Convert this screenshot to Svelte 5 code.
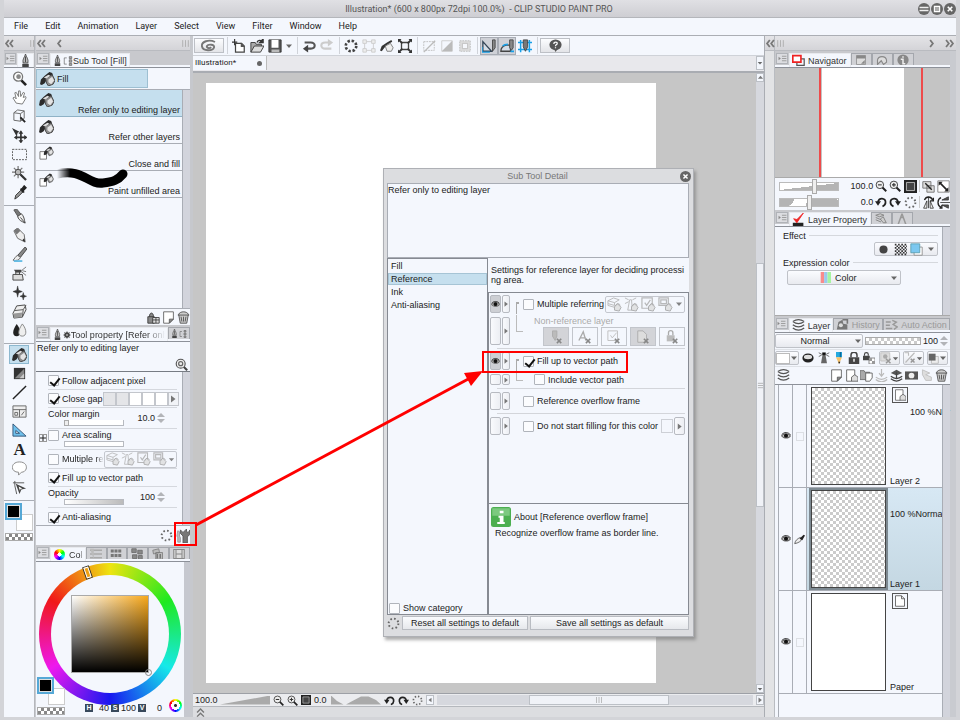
<script lang="ts">
  interface Layer {
    name: string;
    info: string;
    kind: 'raster' | 'active' | 'paper';
  }

  const menus = ['File', 'Edit', 'Animation', 'Layer', 'Select', 'View', 'Filter', 'Window', 'Help'];

  const toolGroups = [
    ['zoom', 'hand', 'cube', 'move', 'marquee', 'wand', 'dropper'],
    ['pen', 'pencil', 'brush', 'airbrush', 'sparkle', 'eraser', 'blend'],
    ['fill', 'gradient', 'line', 'frame', 'ruler', 'text', 'balloon', 'correct'],
  ];

  const subTools = [
    { name: 'Refer only to editing layer', icon: 'fill' },
    { name: 'Refer other layers', icon: 'fill' },
    { name: 'Close and fill', icon: 'fillpage' },
    { name: 'Paint unfilled area', icon: 'fillpage' },
  ];

  const commandGroups = [
    ['newpage', 'open', 'save', 'caret'],
    ['undo', 'redo'],
    ['clear', 'crop', 'fillcmd', 'scale'],
    ['deselect', 'invert', 'border'],
    ['snapruler', 'snapspecial', 'snapgrid'],
  ];

  const categories = ['Fill', 'Reference', 'Ink', 'Anti-aliasing'];
  const referTargets = ['reflayers', 'refbeacon', 'refcheck', 'reffolder'];
  const excluded = ['xpencil', 'xtext', 'xcheck', 'xpage', 'xlock'];

  const layers: Layer[] = [
    { name: 'Layer 2', info: '100 %Nor', kind: 'raster' },
    { name: 'Layer 1', info: '100 %Normal', kind: 'active' },
    { name: 'Paper', info: '', kind: 'paper' },
  ];

  let category = $state('Reference');
  let subTool = $state(0);

  // Tipped bucket, shared by the fill tool and its sub tools
  const bucket =
    '<path d="M0 14l1-5 4-4 5-4 3 1 1 3-6 3-3 5-3 2z" fill="#2b2b2b"/><path d="M6 8l7-4 3 6-2 4-5 2-2-3z" fill="#8c8c8c" stroke="#444"/><path d="M9 9l4-3 2 4-3 4-3-2z" fill="#e4e4e4"/><path d="M4 7l5-3 2 1-4 3z" fill="#ddd"/>';
  const smallX = '<path d="M9 10l5 5M14 10l-5 5" stroke="#888" stroke-width="1.8"/>';
  const faintBucket = '<path d="M8 10l3-3 4 4-2 4-5-1z" fill="#ddd" stroke="#999"/><path d="M9 10c1-3 4-4 5-1" fill="none" stroke="#999"/>';

  const icons: Record<string, string> = {
    zoom: '<circle cx="6.500" cy="6" r="4.800" fill="#fff" stroke="#777" stroke-width="1.400"/><path d="M10 10l5 5" stroke="#222" stroke-width="2.800"/><circle cx="7" cy="6" r="2.500" fill="#888"/>',
    hand: '<path d="M4.500 14L1 8.500l1.500-1 2 2L3 3l1.500-.5L7 7V1h1.700l.6 6L12 2.500l1.400.7L12 8l2.500-1 .5 1.400-4 6.600z" fill="#fff" stroke="#777"/>',
    cube: '<path d="M2 4l4-3 7 1v8l-4 3-7-1zM2 4l7 1 4-3M9 5v8" fill="none" stroke="#666"/><path d="M9 9l5 5" stroke="#222" stroke-width="2"/>',
    move: '<path d="M0 0l8 4-2 1-1 4z" fill="#333"/><path d="M4 10h11M9.500 4v11" stroke="#333" stroke-width="1.800"/><path d="M9.500 2.500L7 6h5zM9.500 16.500L7 13h5zM2 10l3.500-2.500v5zM16.500 10L13 7.500v5z" fill="#333"/>',
    marquee: '<path d="M.5 2.500h15v11H.5z" fill="none" stroke="#555" stroke-dasharray="2 1.200"/>',
    wand: '<path d="M6.500 0v13M0 6.500h13M2 2l9 9M11 2l-9 9" stroke="#777" stroke-width="1.300"/><circle cx="6.500" cy="6.500" r="3" fill="#bbb" stroke="#444"/><path d="M9 9l6 6" stroke="#333" stroke-width="2.400"/>',
    dropper: '<path d="M3 15l1-4 6-6 2 2-6 6z" fill="#999" stroke="#333"/><path d="M9 4l4 4M10 5l3-4 2 2-4 4z" fill="#222" stroke="#222" stroke-width="1.500"/>',
    pen: '<path d="M2 1l3-1 5 6-3 3z" fill="#777" stroke="#555"/><path d="M6 8l4-3c3 3 3 6 4 10-4-2-7-3-8-7zM14 15L9 9" fill="#eee" stroke="#444"/>',
    pencil: '<path d="M2 3l4-3 7 7 1 8-8-4z" fill="#eee" stroke="#666"/><path d="M2 3l4-3 3 3-4 4z" fill="#777"/><path d="M11 13l3 2-1-4z" fill="#222"/>',
    brush: '<path d="M14 0l2 2-7 9-3-2z" fill="#888" stroke="#444"/><path d="M6 9l3 2c-1 3-4 4-8 3 2-1 2-4 5-5z" fill="#eee" stroke="#666"/><path d="M2 15h9" stroke="#66bde5" stroke-width="2"/>',
    airbrush: '<path d="M1 9h10l1 6H1zM4 9V6h4v3" fill="#ddd" stroke="#444"/><path d="M2 4h8v3H4z" fill="#444"/><path d="M10 5l5-4M10 6l5 4M11 5l4 1" stroke="#777"/>',
    sparkle: '<path d="M6 1l1 4.500L11 7 7 8.500 6 13 5 8.500 1 7l4-1.500zM12 8l.8 3 2.700 1-2.700 1-.8 3-.8-3-2.700-1 2.700-1z" fill="#333" stroke="#333" stroke-width=".5"/>',
    eraser: '<path d="M5 2l9-1 1 5-4 8-9 1-1-5z" fill="#eee" stroke="#444"/><path d="M3 7l9-1 3-5M12 6l-1 8" fill="none" stroke="#555"/><path d="M2 10l9-1-1 5-8 1z" fill="#999"/>',
    blend: '<path d="M5 1c5 6 5 13 0 13S0 8 5 1z" fill="#222"/><path d="M11 1c5 6 5 13 0 13S6 8 11 1z" fill="#eee" stroke="#888"/>',
    fill: bucket,
    fillcmd: '<path d="M0 13l2-5 6-4 5-3 1 2-5 3-4 4-3 4z" fill="#333"/><path d="M6 8l6-3 3 5-2 4H8z" fill="#eee" stroke="#777"/>',
    fillpage: `<path d="M1 6h7v8H1z" fill="#fff" stroke="#777"/><g transform="translate(5 0) scale(.65)">${bucket}</g>`,
    gradient: '<path d="M2 2h12v12H2z" fill="#333"/><path d="M3 13l10-10v10z" fill="#888"/><path d="M8 13l5-5v5z" fill="#ccc"/>',
    line: '<path d="M1 15L15 1" stroke="#222" stroke-width="1.500"/>',
    frame: '<path d="M1 2h14v12H1zM1 6h14M8 6v8M3 9h3v3H3zM10 12l3-4" fill="#eee" stroke="#666"/>',
    ruler: '<path d="M1 1l14 13H1z" fill="#6fc0ec" stroke="#357"/><path d="M4 8l4 3H4z" fill="#fff" stroke="#357"/>',
    text: '<text x="8" y="14" text-anchor="middle" font-family="Liberation Serif, serif" font-weight="bold" font-size="18" fill="#222">A</text>',
    balloon: '<path d="M8 1c10 0 9 11 2 11l-3 3v-3C-2 12-2 1 8 1z" fill="#fff" stroke="#888"/>',
    correct: '<path d="M1 3h12M3 1v5l2 9" stroke="#555" fill="none"/><path d="M4 4l11 5-5 1-2 5z" fill="#444"/><path d="M7 7l4 2-2 .5-.5 2z" fill="#fff"/>',
    dblleft: '<path d="M7 3L3 8l4 5M13 3L9 8l4 5" fill="none" stroke="#777" stroke-width="2.600"/>',
    dblright: '<path d="M3 3l4 5-4 5M9 3l4 5-4 5" fill="none" stroke="#777" stroke-width="2.600"/>',
    dblup: '<path d="M3 8l5-5 5 5M3 14l5-5 5 5" fill="none" stroke="#777" stroke-width="2"/>',
    left: '<path d="M10 3L6 8l4 5" fill="none" stroke="#777" stroke-width="2.600"/>',
    right: '<path d="M6 3l4 5-4 5" fill="none" stroke="#777" stroke-width="2.600"/>',
    grip: '<path d="M3 2v12M8 2v12M13 2v12" stroke="#aaa" stroke-width="1.500"/>',
    rowgrip: '<path d="M2 3h12M2 8h12M2 13h12" stroke="#999" stroke-width="1.500"/>',
    menu: '<path d="M7 4h8M7 8h8M7 12h8" stroke="#888" stroke-width="1.300"/><path d="M1 5l4 3-4 3z" fill="#888"/>',
    nib: '<path d="M8 0c1 4 4 6 3 11H5C4 6 7 4 8 0z" fill="#bbb" stroke="#444"/><path d="M8 3v7" stroke="#333"/><path d="M4 12h8v4H4z" fill="#444"/>',
    list: '<path d="M2 3v10M2 3h4M2 13h4" fill="none" stroke="#555"/><path d="M10 1h4v3h-4zM10 6h4v4h-4zM10 12h4v3h-4z" fill="#aaa" stroke="#555"/>',
    gear: '<circle cx="8" cy="8" r="5.500" fill="#444"/><path d="M8 1v14M1 8h14M3 3l10 10M13 3L3 13" stroke="#444" stroke-width="2"/><circle cx="8" cy="8" r="2" fill="#aaa"/>',
    spiral: '<path d="M10 9c-1 2-5 1-4-1s8-2 7 1.500-11 4-12-1S8 1 14 4" fill="none" stroke="#777" stroke-width="1.900"/>',
    newpage: '<path d="M4 5h7l3 3v7H4z" fill="#fff" stroke="#444" stroke-width="1.400"/><path d="M3 0v7M0 3.500h6" stroke="#333" stroke-width="1.300"/><path d="M10 4l5 5h-5z" fill="#555"/>',
    open: '<path d="M1 15V4h5l1 2h6v2" fill="#aaa" stroke="#333"/><path d="M1 15l4-7h11l-4 7z" fill="#ddd" stroke="#333"/><path d="M8 4c1-3 4-3 6-1M15 0v4h-4z" fill="none" stroke="#333" stroke-width="1.500"/>',
    save: '<path d="M1 1h14v14H1z" fill="#555" stroke="#333"/><path d="M4 1h8v9H4z" fill="#fff"/><path d="M4 12h9v3H4z" fill="#bbb"/>',
    caret: '<path d="M2 5h12l-6 7z" fill="#666"/>',
    undo: '<path d="M3 4h7c6 0 6 7 0 7H6" fill="none" stroke="#555" stroke-width="2.400"/><path d="M7 6.500v9L1 11z" fill="#444"/>',
    redo: '<path d="M13 11H6C0 11 0 4 6 4h4" fill="none" stroke="#ccc" stroke-width="2.400"/><path d="M9 0v8.500L15 4z" fill="#ccc"/>',
    clear: '<circle cx="8" cy="8" r="6" fill="none" stroke="#444" stroke-width="3" stroke-dasharray="2.710 2"/>',
    crop: '<path d="M3 3h10v10H3z" fill="none" stroke="#ccc"/><path d="M1 1h4v4H1zM11 1h4v4h-4zM1 11h4v4H1zM11 11h4v4h-4z" fill="#eee" stroke="#ccc"/>',
    scale: '<path d="M4 4h8v8H4z" fill="none" stroke="#444" stroke-width="1.500"/><path d="M1 1l4 4M15 1l-4 4M1 15l4-4M15 15l-4-4" stroke="#333" stroke-width="2.200"/><path d="M0 0h4L0 4zM16 0v4l-4-4zM0 16v-4l4 4zM16 16h-4l4-4z" fill="#333"/>',
    deselect: '<path d="M2 3h12v10H2z" fill="none" stroke="#bbb" stroke-dasharray="2 1"/><path d="M2 15L15 2" stroke="#bbb" stroke-width="1.600"/>',
    invert: '<path d="M2 2h12v12H2z" fill="none" stroke="#ccc"/><path d="M14 2v12H2z" fill="#bbb"/>',
    border: '<path d="M2 2h12v12H2z" fill="#ddd" stroke="#bbb" stroke-dasharray="2 1"/><path d="M5 5h6v6H5z" fill="#f5f7fb" stroke="#bbb"/>',
    snapruler: '<path d="M1 3l10 11H1z" fill="#d5dde6" stroke="#345" stroke-width="1.500"/><path d="M12 1h3v9l-3 4z" fill="#888" stroke="#444"/><path d="M0 9v6h9" stroke="#18a0e8" fill="none" stroke-width="1.600"/>',
    snapspecial: '<path d="M1 14c0-4 2-6 6-7h5v7z" fill="#d5dde6" stroke="#444" stroke-width="1.500"/><path d="M11 1h4v9l-2 3-2-3z" fill="#888" stroke="#444"/><path d="M3 8c2-2 4-2 6-2M12 14h4" stroke="#18a0e8" fill="none" stroke-width="2"/>',
    snapgrid: '<path d="M3 1v14M13 1v14M0 4h16M0 12h16" stroke="#18a0e8" stroke-width="1.700"/><path d="M6 1h5v8l-2.500 5L6 9z" fill="#777" stroke="#444"/>',
    help: '<ellipse cx="8" cy="7" rx="7.500" ry="6.500" fill="#555"/><path d="M6 12h5l-3 4z" fill="#555"/><path d="M6 6c0-3 5-3 4 0-.5 1-2 1-2 3M8 10v1.500" fill="none" stroke="#fff" stroke-width="1.500"/>',
    minus: '<circle cx="8" cy="8" r="8" fill="#666"/><path d="M2 6h12M2 10h12" stroke="#eee" stroke-width="1.800"/>',
    restore: '<circle cx="8" cy="8" r="8" fill="#666"/><path d="M4.500 4.500h7v7h-7z" fill="#aaa" stroke="#fff" stroke-width="1.500"/>',
    close: '<circle cx="8" cy="8" r="8" fill="#666"/><path d="M5 5l6 6M11 5l-6 6" stroke="#fff" stroke-width="2.200"/>',
    trash: '<path d="M2 4c2-4 10-4 12 0l-2 11H4z" fill="#ccc" stroke="#444"/><path d="M1 5h14M5 7l1 6M8 7v6M11 7l-1 6" stroke="#444"/>',
    page: '<path d="M2 1h12v9l-5 5H2z" fill="#fff" stroke="#555"/><path d="M14 10H9v5z" fill="#888" stroke="#555"/>',
    pageadd: '<path d="M2 1h10v9l-4 5H2z" fill="#fff" stroke="#555"/><path d="M8 10l4-3 4 3v5H8z" fill="#ddd" stroke="#555"/>',
    folderadd: '<path d="M0 2h5l1 2h6v9H0z" fill="#aaa" stroke="#666"/><path d="M7 5h8v6l-3 4H7z" fill="#fff" stroke="#555"/>',
    addbox: '<path d="M1 7h8v8H1zM3 7c0-6 5-6 5 0" fill="#888" stroke="#333"/><path d="M7 8h8v7H7z" fill="#ddd" stroke="#333"/><path d="M7 11h8M11 8v7" stroke="#333"/>',
    wrench: '<path d="M8 16V8L5 5V1l3 3 3-3 1-1v3l2 1 2-3v5l-3 3v7z" fill="#777" stroke="#555"/><path d="M2 2l2 1v5l1 2v5H2v-5L1 8z" fill="#bbb" stroke="#999"/>',
    ring: '<circle cx="8" cy="8" r="6" fill="none" stroke="#666" stroke-width="2.400" stroke-dasharray="2 2.710"/>',
    inspect: '<circle cx="7" cy="7" r="5.500" fill="#eee" stroke="#555" stroke-width="1.400"/><circle cx="7" cy="7" r="2.500" fill="none" stroke="#666" stroke-width="1.500"/><path d="M11 11l4 4" stroke="#444" stroke-width="2.500"/>',
    reflayers: `<path d="M1 4l6-3 6 2-5 3zM1 4v3l7 2V6M1 7v2l7 2" fill="none" stroke="#aaa"/>${faintBucket}`,
    refbeacon: `<path d="M6 3h2l1 11H4zM1 1l4 2M13 1L9 3M1 7l4-2" fill="none" stroke="#aaa"/>${faintBucket}`,
    refcheck: `<path d="M1 1h11v11H1zM4 6l2 3 4-6" fill="none" stroke="#aaa" stroke-width="1.300"/>${faintBucket}`,
    reffolder: `<path d="M1 1h10v8H1zM3 3h6v4H3z" fill="none" stroke="#aaa" stroke-width="1.300"/>${faintBucket}`,
    xpencil: `<path d="M4 1h5v6l-2 5-3-5z" fill="#bbb" stroke="#aaa"/>${smallX}`,
    xtext: `<path d="M1 12L6 2l3 10M3 9h6" fill="none" stroke="#aaa" stroke-width="1.500"/>${smallX}`,
    xcheck: `<path d="M1 1h11v11H1zM4 6l2 3 5-6" fill="none" stroke="#bbb"/>${smallX}`,
    xpage: `<path d="M2 1h6l4 4v9H2z" fill="#ddd" stroke="#aaa"/>${smallX}`,
    xlock: `<path d="M2 6h9v7H2z" fill="#bbb"/><path d="M4 6V3c0-3 5-3 5 0v3" fill="none" stroke="#aaa" stroke-width="1.500"/>${smallX}`,
    eye: '<path d="M0 8c4-6 12-6 16 0-4 6-12 5-16 0z" fill="#666"/><path d="M2 8c3-3 9-3 12 0-3 3-9 3-12 0z" fill="#ccc"/><circle cx="8" cy="7.500" r="3.300" fill="#111"/><path d="M1 6C5 1 12 2 15 6" fill="none" stroke="#222" stroke-width="1.500"/>',
    play: '<path d="M4 1l9 7-9 7z" fill="#777"/>',
    playleft: '<path d="M12 2L4 8l8 6z" fill="#777"/>',
    up: '<path d="M2 11h12L8 4z" fill="#777"/>',
    info: '<rect x="0" y="0" width="16" height="16" rx="2" fill="#4caf50"/><path d="M1 1h14v6H1z" fill="#7cc97f"/><path d="M7 3h3v2H7zM6 7h4v5h1v1.500H5V12h2V8.500H6z" fill="#fff"/>',
    navi: '<path d="M6 6h9v8H6z" fill="none" stroke="#555" stroke-width="1.500"/><path d="M1 2h10v8H1z" fill="#fff" stroke="#e22" stroke-width="2"/>',
    window: '<path d="M2 2h12v12H2z" fill="#ddd" stroke="#888"/><path d="M2 2h12v4H2z" fill="#888"/><path d="M8 13l5-5v5z" fill="#888"/>',
    bust: '<path d="M2 14V8c1-6 11-6 12 0v3l-4 3-3-5z" fill="#ddd" stroke="#888" stroke-width="1.500"/>',
    person: '<circle cx="8" cy="8" r="7.500" fill="#888"/><path d="M8 3v2M5 7h3v6h3" stroke="#eee" stroke-width="2" fill="none"/>',
    zoomout: '<circle cx="6.500" cy="6.500" r="5" fill="#eee" stroke="#444" stroke-width="1.300"/><path d="M10 10l5 5" stroke="#222" stroke-width="2.500"/><path d="M4 6.500h5" stroke="#333" stroke-width="1.500"/>',
    zoomin: '<circle cx="6.500" cy="6.500" r="5" fill="#eee" stroke="#444" stroke-width="1.300"/><path d="M10 10l5 5" stroke="#222" stroke-width="2.500"/><path d="M4 6.500h5M6.500 4v5" stroke="#333" stroke-width="1.500"/>',
    fit: '<path d="M0 0h16v16H0z" fill="#222"/><path d="M3 3h10v10H3z" fill="#444" stroke="#ccc"/>',
    resize: '<path d="M1 1h14v14H1z" fill="#fff" stroke="#777"/><path d="M3 3l10 10" stroke="#222" stroke-width="2"/><path d="M2 2h5L2 7zM14 14H9l5-5z" fill="#222"/>',
    resizetwo: '<path d="M1 2h10v8H1zM6 7h9v8H6z" fill="#ddd" stroke="#666"/><path d="M4 4l8 8" stroke="#222" stroke-width="1.800"/>',
    rotleft: '<path d="M4 9c0-8 11-7 10 0 0 2-2 4-4 5" fill="none" stroke="#222" stroke-width="2.400"/><path d="M0 7h8l-4 6z" fill="#222"/>',
    rotright: '<path d="M12 9c0-8-11-7-10 0 0 2 2 4 4 5" fill="none" stroke="#222" stroke-width="2.400"/><path d="M16 7H8l4 6z" fill="#222"/>',
    fliph: '<path d="M2 15l4-9v9zM14 15l-4-9v9zM8 1v14" fill="#eee" stroke="#333"/><path d="M3 5c2-5 8-5 10 0M14 2v4h-4" fill="none" stroke="#222" stroke-width="1.600"/>',
    flipv: '<path d="M4 8h12M6 5l8-4v4zM6 11l8 4v-4z" fill="#555" stroke="#333"/><path d="M5 2C0 4 0 12 5 14M6 11v4H3" fill="none" stroke="#222" stroke-width="1.600"/>',
    check: '<path d="M1 12h13v4H1z" fill="#222"/><path d="M2 7l4 5 8-12-6 6-2 2z" fill="#e22" stroke="#e22"/>',
    layers: '<path d="M1 3c5 4 9 4 14 0M1 7c5 4 9 4 14 0M1 11c5 4 9 4 14 0M1 3c5-3 9-3 14 0" fill="none" stroke="#555" stroke-width="1.500"/>',
    fanlayers: '<path d="M1 3l6-2 5 2-6 2zM1 6l7 3M1 9l7 3M7 8l4-3 4 8h-4z" fill="#ccc" stroke="#888" stroke-width="1.300"/>',
    compass: '<path d="M8 1l5 14M8 1L3 15M6 6h4" stroke="#999" stroke-width="2" fill="none"/>',
    circle: '<circle cx="8" cy="8" r="5" fill="#444"/>',
    tone: '<path d="M1 2h15M1 6h15M1 10h15M1 14h15" stroke="#333" stroke-width="2" stroke-dasharray="2 2"/><path d="M3 4h13M3 8h13M3 12h13" stroke="#333" stroke-width="2" stroke-dasharray="2 2"/>',
    squares: '<path d="M5 5h10v10H5z" fill="#fff" stroke="#888"/><path d="M1 1h11v11H1z" fill="#7cc8f0" stroke="#59a"/>',
    bars: '<path d="M1 0h5v16H1z" fill="#f88b8b"/><path d="M6 0h5v16H6z" fill="#9bc9ec"/><path d="M11 0h5v16h-5z" fill="#a6f5a0"/>',
    history: '<path d="M1 14l2-9 5-3 1 5 5 1v6z" fill="#777"/><path d="M8 2h6v5" fill="none" stroke="#777" stroke-width="2"/><circle cx="6" cy="9" r="2.500" fill="#ddd"/>',
    auto: '<path d="M1 5h6M1 9h5M1 13h8M9 3l5 2-4 3 5 3-4 3" fill="none" stroke="#999" stroke-width="1.700"/>',
    mask: '<ellipse cx="8" cy="8" rx="7.500" ry="6" fill="#222"/><ellipse cx="8" cy="6.500" rx="5.500" ry="3" fill="#ddd"/>',
    tower: '<path d="M6 4h4l2 11H4z" fill="#666"/><path d="M6 1h4v3H6zM1 1l4 2M15 1l-4 2M1 6l4-2M15 6l-4-2" stroke="#444"/>',
    draft: '<path d="M4 0h8v7H4z" fill="#25a9e0"/><path d="M4 7h8l-4 9z" fill="#f5c26b"/><path d="M7 13h3l-2 3z" fill="#222"/><path d="M9 0h2v7H9z" fill="#0c6a9a"/>',
    lock: '<path d="M1 7h14v9H1z" fill="#444"/><path d="M4 7V4c0-5 8-5 8 0v3" fill="none" stroke="#444" stroke-width="2"/><path d="M8 9v4" stroke="#eee" stroke-width="2"/>',
    lockalpha: '<path d="M0 5h9v6H0z" fill="#444"/><path d="M2 5V3c0-3 5-3 5 0v2" fill="none" stroke="#444" stroke-width="1.500"/><path d="M8 8h8v8H8z" fill="#fff" stroke="#666"/><path d="M8 8h4v4H8zM12 12h4v4h-4z" fill="#999"/>',
    maskx: '<path d="M1 1h12v11H1z" fill="#ddd" stroke="#bbb"/><circle cx="7" cy="6" r="3" fill="#aaa"/><path d="M8 9l6 6M14 9l-6 6" stroke="#999" stroke-width="2"/>',
    rulerx: '<path d="M2 14L14 1M1 1h5v4" fill="none" stroke="#bbb" stroke-width="1.500"/><path d="M9 9l5 5M14 9l-5 5" stroke="#999" stroke-width="2"/>',
    twotone: '<path d="M5 5h10v10H5z" fill="#eee" stroke="#aaa"/><path d="M1 1h10v10H1z" fill="#666"/>',
    transfer: '<path d="M1 10c5 4 9 4 14 0M1 13c5 4 9 4 14 0M8 0v8M5 5l3 4 3-4" fill="none" stroke="#bbb" stroke-width="1.500"/>',
    merge: '<path d="M1 5l7-4 7 4-7 3z" fill="#555"/><path d="M1 9c5 4 9 4 14 0M1 12c5 4 9 4 14 0M8 4v7" fill="none" stroke="#444" stroke-width="1.500"/>',
    maskadd: '<path d="M0 3h16v10H0z" fill="#555"/><circle cx="8" cy="8" r="3.500" fill="#eee"/>',
    apply: '<path d="M3 1l9 4-5 2 7 3v4H7L3 7z" fill="#ddd" stroke="#bbb"/>',
    pencilmark: '<path d="M1 14c1-5 4-7 8-9l3 2c-2 4-6 6-11 7z" fill="#eee" stroke="#333"/><path d="M8 7l6-6 2 1-4 7z" fill="#222"/>',
    corner: '<path d="M2 1h8l4 4v10H2z" fill="#fff" stroke="#444"/><path d="M10 1v4h4" fill="none" stroke="#444"/>',
    rgb: '<path d="M0 3h16M0 8h16M0 13h16" stroke="#aaa" stroke-width="2"/><path d="M0 1h5v14" fill="#bbb"/>',
    tiles: '<path d="M1 2h4v4H1zM6 2h4v4H6zM11 2h4v4h-4zM1 8h4v4H1zM6 8h4v4H6zM11 8h4v4h-4z" fill="#777"/>',
    mixed: '<path d="M1 1h6v5H1zM9 3h6v5H9zM2 9h6v5H2zM10 10h5v5h-5z" fill="#888" stroke="#666"/>',
    stack: '<path d="M1 3l8-2 1 5-8 2zM5 6h9v9H5z" fill="#bbb" stroke="#777"/><path d="M7 8v6M11 8v6" stroke="#777" stroke-width="2"/>',
    film: '<path d="M1 2h14v12H1zM4 2v12M12 2v12M4 8h8" fill="#ddd" stroke="#888" stroke-width="1.400"/>',
  };
</script>

{#snippet icon(name: string, size = 14)}
  <svg class="icon" width={size} height={size} viewBox="0 0 16 16" aria-hidden="true">{@html icons[name]}</svg>
{/snippet}

{#snippet spinner()}
  <svg class="icon" width="8" height="12" viewBox="0 0 8 12" aria-hidden="true"><path d="M0 5h8L4 1zM0 7h8l-4 4z" fill="#b2b4b8" /></svg>
{/snippet}

{#snippet menuTab()}
  <button class="menu-tab" aria-label="Palette menu">{@render icon('menu', 9)}</button>
{/snippet}

{#snippet swatches()}
  <div class="swatches">
    <button class="swatch sub" aria-label="Sub color"></button>
    <button class="swatch main" aria-label="Main color"></button>
    <button class="swatch clear" aria-label="Transparent color"></button>
  </div>
{/snippet}

{#snippet rowButtons(shown: boolean)}
  <button class="eye-button" class:shown aria-label="Show in Tool property">{#if shown}{@render icon('eye', 9)}{/if}</button>
  <button class="arrow-button" aria-label="Options">{@render icon('play', 6)}</button>
{/snippet}

<div class="app">
  <header class="title-bar">
    <h1>Illustration* (600 x 800px 72dpi 100.0%)&nbsp; - CLIP STUDIO PAINT PRO</h1>
    <div class="window-buttons">
      <button aria-label="Minimize">{@render icon('minus', 12)}</button>
      <button aria-label="Restore">{@render icon('restore', 12)}</button>
      <button aria-label="Close">{@render icon('close', 12)}</button>
    </div>
  </header>
  <nav class="menu-bar">
    {#each menus as menu (menu)}
      <button>{menu}</button>
    {/each}
  </nav>

  <div class="workspace">
    <!-- Tool palette -->
    <aside class="dock tools">
      <div class="dock-head">{@render icon('dblleft', 11)}<span class="spacer"></span>{@render icon('grip', 9)}</div>
      <div class="tabs">{@render menuTab()}<span class="tab active">{@render icon('nib', 13)}</span></div>
      {#each toolGroups as group}
        <div class="tool-group">
          {#each group as tool (tool)}
            <button class="tool" class:selected={tool === 'fill'} aria-label={tool}>{@render icon(tool, 15)}</button>
          {/each}
        </div>
      {/each}
      {@render swatches()}
    </aside>

    <!-- Sub tool, tool property and color wheel -->
    <aside class="dock sub-dock">
      <div class="dock-head">{@render icon('dblleft', 11)}{@render icon('left', 11)}<span class="spacer"></span>{@render icon('grip', 9)}</div>
      <div class="tabs">
        {@render menuTab()}
        <span class="tab active">{@render icon('nib', 11)}{@render icon('list', 10)}<span>Sub Tool [Fill]</span></span>
      </div>
      <div class="group-row"><button class="group-button">{@render icon('fill', 15)}Fill</button></div>
      <div class="sub-list">
        <div class="sub-rows">
          {#each subTools as tool, i (tool.name)}
            <button class="sub-row" class:selected={subTool === i} onclick={() => (subTool = i)}>
              {@render icon(tool.icon, 15)}
              {#if i === 3}
                <svg class="stroke" width="76" height="20" viewBox="0 0 76 20" aria-hidden="true">
                  <defs><linearGradient id="fade"><stop offset="0" stop-color="#000" stop-opacity="0" /><stop offset=".2" /></linearGradient></defs>
                  <path d="M4 6C30 0 35 17 50 15c10-1 15-3 20-9" fill="none" stroke="url(#fade)" stroke-width="9" stroke-linecap="round" />
                </svg>
              {/if}
              <span>{tool.name}</span>
            </button>
          {/each}
        </div>
        <div class="scroll"></div>
      </div>
      <div class="sub-footer">{@render icon('addbox', 13)}{@render icon('page', 13)}{@render icon('trash', 13)}</div>

      <div class="tabs">
        {@render menuTab()}
        <span class="tab active clipped">{@render icon('nib', 11)}{@render icon('gear', 8)}<span class="fade">Tool property [Refer only to ec</span></span>
        <button class="tab" aria-label="Brush size">{@render icon('nib', 9)}{@render icon('list', 8)}</button>
      </div>
      <div class="properties">
        <div class="prop-list">
          <div class="prop-title"><span>Refer only to editing layer</span><i>{@render icon('inspect', 13)}</i></div>
          <div class="prop short"><label><input type="checkbox" checked />Follow adjacent pixel</label></div>
          <div class="prop short">
            <label><input type="checkbox" checked />Close gap</label>
            <div class="gap-steps">
              {#each Array(5) as _, n}<button class:pressed={n < 2} aria-label="Level {n + 1}"></button>{/each}
              <button class="gap-more" aria-label="More">{@render icon('play', 8)}</button>
            </div>
          </div>
          <div class="prop tall">
            <label for="margin">Color margin</label>
            <input id="margin" class="range ramp" type="range" value="0" />
            <span class="value">10.0 {@render spinner()}</span>
          </div>
          <div class="prop tall scaling">
            <button class="expand" aria-label="Expand">
              <svg class="icon" width="6" height="6" viewBox="0 0 6 6"><path d="M3 0v6M0 3h6" stroke="#222" /></svg>
            </button>
            <label><input type="checkbox" />Area scaling</label>
            <span class="bar"></span>
          </div>
          <div class="prop medium">
            <label class="narrow"><input type="checkbox" /><span class="fade">Multiple referi</span></label>
            <div class="refer-group">
              {#each referTargets as target (target)}{@render icon(target, 14)}{/each}{@render icon('caret', 7)}
            </div>
          </div>
          <div class="prop short"><label><input type="checkbox" checked />Fill up to vector path</label></div>
          <div class="prop tall">
            <span>Opacity</span>
            <span class="bar shaded"></span>
            <span class="value">100 {@render spinner()}</span>
          </div>
          <div class="prop short"><label><input type="checkbox" checked />Anti-aliasing</label></div>
        </div>
        <div class="scroll"></div>
      </div>
      <div class="prop-footer">{@render icon('ring', 13)}{@render icon('wrench', 14)}</div>

      <div class="tabs">
        {@render menuTab()}
        <span class="tab active color-tab"><i class="mini-wheel"></i><span class="fade">Colo</span></span>
        {#each ['rgb', 'tiles', 'mixed', 'stack', 'film'] as name (name)}
          <button class="tab wide" aria-label={name}>{@render icon(name, 12)}</button>
        {/each}
      </div>
      <div class="color-panel">
        <div class="wheel">
          <div class="wheel-hole"><div class="color-square"></div></div>
          <i class="hue-mark"></i>
          <i class="color-mark"></i>
        </div>
        {@render swatches()}
        <div class="hsv"><b>H</b><span>40</span><b>S</b><span>100</span><b>V</b><span>0</span><i class="mini-wheel play"></i></div>
      </div>
    </aside>

    <!-- Canvas -->
    <main class="center">
      <div class="command-bar">
        <button class="command-button" aria-label="Clip Studio">{@render icon('spiral', 16)}</button>
        {#each commandGroups as group}
          <span class="divider"></span>
          {#each group as command (command)}
            <button class="command" class:on={command === 'snapruler' || command === 'snapspecial'} class:slim={command === 'caret'} aria-label={command}>
              {@render icon(command, command === 'caret' ? 8 : 14)}
            </button>
          {/each}
        {/each}
        <span class="divider"></span>
        <button class="command-button" aria-label="Help">{@render icon('help', 13)}</button>
      </div>
      <div class="file-tabs">
        <button class="file-tab"><span>Illustration*</span><i></i></button>
        <button class="end-button" aria-label="Tab list">{@render icon('caret', 6)}</button>
      </div>
      <div class="view">
        <div class="canvas"><div class="paper"></div></div>
        <div class="v-scroll">
          <button aria-label="Scroll up">{@render icon('up', 7)}</button>
          <div class="v-thumb">{@render icon('rowgrip', 7)}</div>
          <button aria-label="Scroll down">{@render icon('caret', 6)}</button>
        </div>
      </div>
      <div class="status-bar">
        <span class="zoom-value">100.0</span>
        <i class="wedge"></i>
        {@render icon('zoomout', 11)}{@render icon('zoomin', 11)}{@render icon('fit', 10)}
        <span class="angle-value">0.0</span>
        <i class="wedge arch"></i>
        {@render icon('rotleft', 11)}{@render icon('rotright', 11)}{@render icon('ring', 11)}
        <button class="h-end" aria-label="Scroll left">{@render icon('playleft', 6)}</button>
        <div class="h-track"><div class="h-thumb">{@render icon('grip', 8)}</div></div>
        <button class="h-end" aria-label="Scroll right">{@render icon('play', 6)}</button>
      </div>
      <div class="timeline">{@render icon('dblup', 11)}</div>
    </main>

    <aside class="collapsed"><div class="dock-head">{@render icon('dblleft', 11)}</div></aside>

    <!-- Navigator, layer property and layers -->
    <aside class="dock right-dock">
      <div class="dock-head">{@render icon('grip', 9)}<span class="spacer"></span>{@render icon('right', 11)}{@render icon('dblright', 11)}</div>
      <div class="tabs">
        {@render menuTab()}
        <span class="tab active roomy">{@render icon('navi', 13)}<span>Navigator</span></span>
        {#each ['window', 'bust', 'person'] as name (name)}
          <button class="tab wide" aria-label={name}>{@render icon(name, 12)}</button>
        {/each}
      </div>
      <div class="navigator"><div class="nav-frame"><div class="nav-paper"></div></div></div>
      <div class="nav-row">
        <input class="range wedge-range" type="range" value="60" aria-label="Zoom" />
        <span class="nav-value">100.0</span>
        {@render icon('zoomout', 12)}{@render icon('zoomin', 12)}{@render icon('fit', 13)}<i class="vline"></i>{@render icon('resizetwo', 13)}{@render icon('resize', 13)}
      </div>
      <div class="nav-row">
        <input class="range arch-range" type="range" value="50" aria-label="Rotation" />
        <span class="nav-value">0.0</span>
        {@render icon('rotleft', 12)}{@render icon('rotright', 12)}{@render icon('ring', 13)}<i class="vline"></i>{@render icon('fliph', 13)}{@render icon('flipv', 13)}
      </div>

      <div class="tabs">
        {@render menuTab()}
        <span class="tab active roomy">{@render icon('check', 13)}<span>Layer Property</span></span>
        <button class="tab wide" aria-label="Search layer">{@render icon('fanlayers', 12)}</button>
        <button class="tab wide" aria-label="Animation cels">{@render icon('compass', 12)}</button>
      </div>
      <div class="layer-property">
        <div class="lp-body">
          <div class="legend">Effect</div>
          <div class="effects">{@render icon('circle', 13)}{@render icon('tone', 13)}{@render icon('squares', 13)}{@render icon('caret', 8)}</div>
          <div class="legend">Expression color</div>
          <button class="color-mode">{@render icon('bars', 11)}<span>Color</span>{@render icon('caret', 8)}</button>
        </div>
        <div class="scroll"></div>
      </div>

      <div class="tabs">
        {@render menuTab()}
        <span class="tab active roomy">{@render icon('layers', 13)}<span>Layer</span></span>
        <button class="tab roomy">{@render icon('history', 13)}<span>History</span></button>
        <button class="tab roomy">{@render icon('auto', 13)}<span>Auto Action</span></button>
      </div>
      <div class="layer-bar">
        <button class="blend-mode"><span>Normal</span>{@render icon('caret', 8)}</button>
        <span class="opacity-bar checker"></span>
        <span class="value">100 {@render spinner()}</span>
      </div>
      <div class="layer-bar">
        <span class="combo"><i class="blank"></i>{@render icon('caret', 8)}</span>
        {#each ['mask', 'tower', 'draft', 'lock', 'lockalpha'] as name (name)}{@render icon(name, 12)}{/each}
        <span class="combo">{@render icon('maskx', 12)}{@render icon('caret', 7)}</span>
        <span class="combo">{@render icon('rulerx', 12)}{@render icon('caret', 7)}</span>
        <span class="combo">{@render icon('twotone', 11)}{@render icon('caret', 8)}</span>
      </div>
      <div class="layer-bar new-bar">
        {@render icon('layers', 13)}<span class="spacer"></span>
        {#each ['page', 'pageadd', 'folderadd', 'transfer', 'merge', 'maskadd', 'apply', 'trash'] as name (name)}{@render icon(name, 13)}{/each}
      </div>
      <div class="layer-list">
        <div class="layer-rows">
          {#each layers as layer (layer.name)}
            <div class="layer" class:current={layer.kind === 'active'}>
              <button class="cell" aria-label="Toggle {layer.name}">{@render icon('eye', 10)}</button>
              <div class="cell">{#if layer.kind === 'active'}{@render icon('pencilmark', 11)}{:else}<i class="lock-box"></i>{/if}</div>
              <div class="thumb" class:checker={layer.kind !== 'paper'}></div>
              <div class="layer-text">
                {#if layer.kind !== 'active'}<span class="badge">{@render icon(layer.kind === 'paper' ? 'corner' : 'pageadd', 12)}</span>{/if}
                {#if layer.info}<span class="info" class:indent={layer.kind === 'raster'}>{layer.info}</span>{/if}
                <span class="name">{layer.name}</span>
              </div>
            </div>
          {/each}
        </div>
        <div class="scroll"></div>
      </div>
    </aside>
  </div>

  <!-- Sub Tool Detail dialog -->
  <section class="dialog" aria-label="Sub Tool Detail">
    <div class="dialog-title"><span>Sub Tool Detail</span><button aria-label="Close dialog">{@render icon('close', 11)}</button></div>
    <div class="dialog-preview">Refer only to editing layer</div>
    <div class="dialog-main">
      <div class="categories">
        {#each categories as name (name)}
          <button class:selected={category === name} onclick={() => (category = name)}>{name}</button>
        {/each}
        <label class="show-category"><input type="checkbox" />Show category</label>
      </div>
      <div class="detail">
        <p class="intro">Settings for reference layer for deciding processing area.</p>
        <div class="settings">
          <div class="setting">
            {@render rowButtons(true)}
            <i class="branch start"></i>
            <label><input type="checkbox" />Multiple referring</label>
            <div class="refer-group">
              {#each referTargets as target (target)}{@render icon(target, 15)}{/each}{@render icon('caret', 8)}
            </div>
          </div>
          <div class="setting double">
            {@render rowButtons(false)}
            <i class="branch end"></i>
            <div class="exclude">
              <span>Non-reference layer</span>
              <div class="exclude-buttons">
                {#each excluded as name (name)}
                  <button class:on={name === 'xpencil' || name === 'xpage'} aria-label={name}>{@render icon(name, 14)}</button>
                {/each}
              </div>
            </div>
          </div>
          <hr />
          <div class="setting">
            {@render rowButtons(true)}
            <i class="branch start"></i>
            <label><input type="checkbox" checked />Fill up to vector path</label>
          </div>
          <div class="setting thin">
            {@render rowButtons(false)}
            <i class="branch end"></i>
            <label class="nested"><input type="checkbox" />Include vector path</label>
          </div>
          <hr />
          <div class="setting">
            {@render rowButtons(false)}
            <i class="branch"></i>
            <label><input type="checkbox" />Reference overflow frame</label>
          </div>
          <hr />
          <div class="setting">
            {@render rowButtons(false)}
            <i class="branch"></i>
            <label><input type="checkbox" />Do not start filling for this color</label>
            <span class="no-color"></span>
            <button class="arrow-button pick" aria-label="Pick color">{@render icon('play', 7)}</button>
          </div>
        </div>
        <div class="about">
          <h2>{@render icon('info', 20)}About [Reference overflow frame]</h2>
          <p>Recognize overflow frame as border line.</p>
        </div>
      </div>
    </div>
    <div class="dialog-footer">
      {@render icon('ring', 13)}
      <button>Reset all settings to default</button>
      <button>Save all settings as default</button>
    </div>
  </section>

  <!-- Callout from the wrench button to the setting -->
  <svg class="callout" width="460" height="200" viewBox="0 0 460 200" aria-hidden="true">
    <g fill="none" stroke="#f00" stroke-width="2">
      <rect x="5" y="173" width="21" height="22" />
      <rect x="313" y="2" width="144" height="20" />
      <path d="M26 175L302 27" stroke-width="3" />
    </g>
    <path d="M313 21l-19 2 7 13z" fill="#f00" />
  </svg>
</div>

<style>
  :global(body) {
    background: #d2d3d7;
  }
  .app {
    --panel: #f4f7fd;
    --line: #a9adb5;
    --frame: #d3d4d8;
    --blue: #c5dfee;
    position: relative;
    box-sizing: border-box;
    display: flex;
    flex-direction: column;
    min-height: 100vh;
    padding: 0 4px 4px;
    background: var(--frame);
    color: #222;
    font: 9px/12px 'Liberation Sans', Arial, sans-serif;
    overflow: hidden;
  }
  .app * {
    box-sizing: border-box;
  }
  button {
    display: flex;
    align-items: center;
    justify-content: center;
    padding: 0;
    border: 0;
    background: none;
    color: inherit;
    font: inherit;
  }
  .icon {
    flex: none;
    display: block;
  }
  .spacer {
    flex: 1;
  }
  input[type='checkbox'] {
    appearance: none;
    flex: none;
    width: 11px;
    height: 11px;
    margin: 0 3px 0 0;
    border: 1px solid #b0b4bb;
    border-radius: 1px;
    background: #fbfcfe;
  }
  input[type='checkbox']:checked::before {
    content: '';
    display: block;
    width: 4px;
    height: 8px;
    margin-left: 3px;
    border: solid #111;
    border-width: 0 2px 2px 0;
    transform: rotate(38deg);
  }
  label {
    display: flex;
    align-items: center;
    white-space: nowrap;
  }
  .checker {
    background: repeating-conic-gradient(#cbcbcb 0 25%, #fff 0 50%) 0 0 / 6px 6px;
  }

  .title-bar {
    display: flex;
    align-items: center;
    height: 18px;
    background: linear-gradient(#e0e0e4, #ceced3);
    border-bottom: 1px solid #b4b6bb;
    color: #555;
  }
  h1 {
    flex: 1;
    margin: 0;
    padding-left: 36px;
    text-align: center;
    font: 9px/16px Roboto, sans-serif;
  }
  .window-buttons {
    display: flex;
    gap: 1px;
  }
  .menu-bar {
    display: flex;
    gap: 17px;
    height: 18px;
    padding-left: 10px;
    background: var(--panel);
    border-bottom: 1px solid #abaeb4;
  }
  .menu-bar button {
    font: 9px/17px Roboto, sans-serif;
  }
  .workspace {
    flex: 1;
    display: grid;
    grid-template-columns: 31px 158px minmax(0, 1fr) 11px 181px;
  }
  .dock {
    display: flex;
    flex-direction: column;
    border-right: 1px solid #b5b7bc;
  }
  .dock-head {
    display: flex;
    flex: none;
    align-items: center;
    gap: 7px;
    height: 15px;
    background: linear-gradient(#e4e4e7, #d4d4d8);
    border-bottom: 1px solid #b9bbc0;
  }
  .tabs {
    display: flex;
    flex: none;
    align-items: stretch;
    height: 17px;
    padding: 2px 0 0 1px;
    background: linear-gradient(#c8c9cd 14px, var(--panel) 14px);
    border-bottom: 1px solid #8d9199;
    font: 9px/12px 'Liberation Sans Narrow', 'Arial Narrow', sans-serif;
  }
  .menu-tab {
    width: 12px;
    height: 11px;
    margin-right: 1px;
    border: 1px solid #b0b3b8;
    background: #dcdde1;
  }
  .tab {
    display: flex;
    align-items: center;
    height: 12px;
    padding: 0 2px 0 1px;
    border: 1px solid #a4a7ad;
    border-bottom: 0;
    background: #d0d1d5;
    color: #999;
    white-space: nowrap;
    overflow: hidden;
  }
  .tab.active {
    height: 14px;
    border-color: #e8eaee;
    background: var(--panel);
    color: #333;
  }
  .tab.wide {
    width: 21px;
  }
  .tab.roomy {
    gap: 3px;
    padding: 0 3px 0 2px;
  }
  .fade {
    overflow: hidden;
    white-space: nowrap;
    mask: linear-gradient(90deg, #000 80%, transparent);
  }
  .clipped {
    width: 120px;
  }
  .color-tab {
    width: 36px;
    gap: 4px;
    padding-left: 3px;
  }
  .scroll {
    flex: none;
    width: 8px;
    background: #d2d4dc;
    border-left: 1px solid var(--line);
  }

  .tools {
    background: var(--panel);
  }
  .tool-group {
    padding: 1px 0 3px;
    border-bottom: 1px solid var(--line);
  }
  .tool {
    width: 20px;
    height: 19px;
    margin: 0 auto;
  }
  .tool.selected {
    background: var(--blue);
    border: 1px solid #8db8cf;
  }
  .swatches {
    position: relative;
    width: 30px;
    height: 40px;
  }
  .swatch {
    position: absolute;
  }
  .swatch.main {
    left: 1px;
    top: 2px;
    width: 17px;
    height: 17px;
    border: 2px solid #55a8d6;
    outline: 1px solid #ddd;
    outline-offset: -3px;
    background: #000;
  }
  .swatch.sub {
    left: 12px;
    top: 13px;
    width: 17px;
    height: 17px;
    border: 1px solid #ccc;
    background: #fff;
  }
  .swatch.clear {
    left: 1px;
    top: 32px;
    width: 28px;
    height: 8px;
    border: 1px solid #aaa;
    background: repeating-conic-gradient(#888 0 25%, #fff 0 50%) 0 0 / 6px 6px;
  }

  .sub-dock {
    background: var(--panel);
    border-left: 1px solid #c9cbd0;
    border-right: 3px solid #c6c8cd;
  }
  .group-row {
    height: 22px;
    padding: 1px 0;
    border-bottom: 1px solid var(--line);
  }
  .group-button {
    justify-content: flex-start;
    gap: 2px;
    width: 112px;
    height: 19px;
    padding-left: 3px;
    border: 1px solid #9dbfd1;
    background: var(--blue);
  }
  .sub-list {
    display: flex;
    height: 219px;
    border-bottom: 1px solid var(--line);
  }
  .sub-rows {
    flex: 1;
  }
  .sub-row {
    position: relative;
    align-items: flex-start;
    justify-content: space-between;
    width: 100%;
    height: 27px;
    padding: 2px 2px 0 3px;
    border-bottom: 1px solid var(--line);
  }
  .sub-row.selected {
    background: var(--blue);
    border-color: #8fb2c6;
  }
  .sub-row span {
    align-self: flex-end;
    position: relative;
  }
  .stroke {
    position: absolute;
    left: 17px;
    top: -3px;
  }
  .sub-footer,
  .prop-footer {
    display: flex;
    flex: none;
    justify-content: flex-end;
    align-items: center;
    gap: 2px;
    height: 16px;
  }
  .prop-footer {
    height: 19px;
    gap: 3px;
  }
  .properties {
    display: flex;
    height: 184px;
    border-bottom: 1px solid var(--line);
  }
  .prop-list {
    flex: 1;
    min-width: 0;
  }
  .prop-title {
    position: relative;
    display: flex;
    justify-content: space-between;
    height: 30px;
    margin-right: -8px;
    padding-left: 1px;
    background: var(--panel);
    border-bottom: 1px solid #777c84;
  }
  .prop-title i {
    align-self: flex-end;
    padding-right: 2px;
  }
  .prop {
    display: grid;
    grid-template-columns: 76px 1fr;
    align-items: center;
    margin: 0 5px 0 12px;
    border-bottom: 1px solid #d5d8de;
  }
  .prop:last-child {
    border: 0;
  }
  .prop label {
    grid-column: 1;
  }
  .short {
    height: 18px;
  }
  .medium {
    height: 19px;
  }
  .tall {
    height: 21px;
    grid-template-rows: 12px 6px;
    align-content: start;
  }
  .tall .bar,
  .tall .range {
    grid-area: 2 / 1;
  }
  .tall .value {
    grid-area: 1 / 2 / 3 / 3;
    padding-top: 2px;
  }
  .value {
    display: flex;
    justify-content: flex-end;
    align-items: center;
    gap: 2px;
    padding-right: 12px;
  }
  .bar,
  .range.ramp {
    width: 60px;
    height: 6px;
    margin: 0 0 0 16px;
    border: 1px solid #b7bac0;
    background: #fff;
  }
  .range {
    appearance: none;
  }
  .range.ramp {
    border-width: 0 1px 1px 0;
  }
  .range::-webkit-slider-thumb {
    appearance: none;
    width: 5px;
    height: 15px;
    border: 1px solid #aaa;
    background: #eee;
  }
  .ramp::-webkit-slider-thumb {
    height: 6px;
  }
  .bar.shaded {
    background: linear-gradient(90deg, #fff, #bbb);
  }
  .scaling {
    position: relative;
  }
  .expand {
    position: absolute;
    left: -9px;
    top: 5px;
    width: 8px;
    height: 8px;
    border: 1px solid #999;
  }
  .gap-steps {
    display: flex;
    justify-self: end;
  }
  .short:has(.gap-steps) {
    grid-template-columns: auto 1fr;
  }
  .gap-steps button {
    width: 13px;
    height: 14px;
    border: 1px solid #c3c6cc;
    background: #fff;
  }
  .gap-steps .pressed {
    background: #e4e5e8;
  }
  .gap-steps .gap-more {
    width: 11px;
    background: #f1f3f7;
  }
  .medium {
    grid-template-columns: 56px 1fr;
  }
  .narrow .fade {
    font: 9px/12px 'Liberation Sans Narrow', 'Arial Narrow', sans-serif;
  }
  .refer-group {
    display: flex;
    justify-self: end;
    align-items: center;
    justify-content: space-around;
    width: 73px;
    height: 17px;
    border: 1px solid #b9bcc3;
    border-radius: 2px;
    opacity: 0.8;
  }

  .mini-wheel {
    flex: none;
    width: 11px;
    height: 11px;
    border-radius: 50%;
    background: radial-gradient(#fff 25%, transparent 28%), conic-gradient(yellow, lime, cyan, blue, magenta, red, yellow);
  }
  .mini-wheel.play {
    background: radial-gradient(#333 12%, #fff 20% 46%, transparent 48%), conic-gradient(yellow, lime, cyan, blue, magenta, red, yellow);
  }
  .color-panel {
    flex: 1;
    position: relative;
    padding: 1px 0 0 3px;
    border-right: 6px solid #c6c8cf;
  }
  .wheel {
    position: relative;
    display: grid;
    place-items: center;
    width: 142px;
    height: 142px;
    border-radius: 50%;
    background: conic-gradient(#eee410, #1fe91f 60deg, #16e9e9 120deg, #1818f0 180deg, #ee18ee 240deg, #f01818 300deg, #eee410);
  }
  .wheel-hole {
    display: grid;
    place-items: center;
    width: 118px;
    height: 118px;
    border-radius: 50%;
    background: var(--panel);
  }
  .color-square {
    width: 78px;
    height: 78px;
    border: 1px solid #aaa;
    background: linear-gradient(transparent, #000), linear-gradient(90deg, #fff, #f7a81b);
  }
  .hue-mark {
    position: absolute;
    left: 45px;
    top: 3px;
    width: 7px;
    height: 13px;
    border: 1px solid #333;
    outline: 1px solid #fff;
    outline-offset: -2px;
    transform: rotate(-19deg);
  }
  .color-mark {
    position: absolute;
    left: 106px;
    top: 106px;
    width: 7px;
    height: 7px;
    border: 1px solid #888;
    border-radius: 50%;
  }
  .color-panel .swatches {
    position: absolute;
    left: 0;
    bottom: 2px;
  }
  .hsv {
    position: absolute;
    right: 0;
    bottom: 1px;
    display: flex;
    align-items: center;
    gap: 2px;
  }
  .hsv b {
    width: 8px;
    height: 8px;
    background: #38495c;
    color: #fff;
    font: bold 7px/8px 'Liberation Sans', sans-serif;
    text-align: center;
  }
  .hsv span {
    min-width: 14px;
    text-align: right;
  }
  .hsv .mini-wheel {
    width: 13px;
    height: 13px;
    margin: 0 2px 4px 5px;
  }

  .center {
    display: flex;
    flex-direction: column;
    min-width: 0;
  }
  .command-bar {
    display: flex;
    align-items: center;
    height: 20px;
    padding-left: 1px;
    background: var(--panel);
    border-bottom: 1px solid #cfd2d8;
  }
  .command-button {
    width: 30px;
    height: 15px;
    border: 1px solid #bdc0c6;
    background: linear-gradient(#fcfdff, #e3e4e8);
  }
  .divider {
    width: 1px;
    height: 17px;
    margin: 0 2px 0 3px;
    background: #d0d3d9;
  }
  .command {
    width: 18px;
    height: 18px;
  }
  .command.slim {
    width: 10px;
  }
  .command.on {
    border: 1px solid #a8acb4;
    background: #cfd1d7;
  }
  .file-tabs {
    display: flex;
    justify-content: space-between;
    height: 16px;
    background: #e8e8ec;
    border-bottom: 1px solid #a9acb2;
  }
  .file-tab {
    justify-content: space-between;
    width: 74px;
    height: 14px;
    padding: 0 4px 0 2px;
    background: var(--panel);
    border-right: 1px solid #bbb;
    font: 8px/14px Roboto, sans-serif;
  }
  .file-tab i {
    width: 5px;
    height: 5px;
    border-radius: 50%;
    background: #666;
  }
  .end-button,
  .v-scroll button {
    width: 8px;
    height: 9px;
    background: var(--panel);
    border: 1px solid #bcc0c6;
  }
  .end-button {
    height: 14px;
  }
  .view {
    flex: 1;
    display: flex;
    border-top: 1px solid #a9acb2;
  }
  .canvas {
    flex: 1;
    padding: 10px 0 10px 13px;
    background: #c6c6c6;
  }
  .paper {
    width: 450px;
    height: 600px;
    background: #fff;
  }
  .v-scroll {
    display: flex;
    flex-direction: column;
    justify-content: space-between;
    width: 8px;
    background: #d6d8de;
  }
  .v-thumb {
    display: grid;
    place-items: center;
    height: 244px;
    margin-top: 4px;
    border: 1px solid #bcc0c6;
    background: #f0f2f7;
  }
  .status-bar {
    display: flex;
    align-items: center;
    gap: 3px;
    height: 13px;
    padding-left: 2px;
    background: #ebecef;
    border-top: 1px solid #9da0a6;
  }
  .zoom-value {
    width: 22px;
  }
  .angle-value {
    width: 14px;
  }
  .wedge {
    width: 50px;
    height: 9px;
    background: #aaa;
    clip-path: polygon(0 100%, 100% 0, 100% 100%);
  }
  .wedge.arch {
    clip-path: polygon(0 0, 12% 60%, 25% 100%, 0 100%, 100% 100%, 90% 50%, 75% 10%, 60% 10%, 40% 70%, 30% 100%, 0 100%);
  }
  .h-end {
    width: 8px;
    height: 10px;
    border: 1px solid #bcc0c6;
    background: var(--panel);
  }
  .h-track {
    flex: 1;
    height: 10px;
    padding: 0 84px 0 92px;
    background: #d6d8de;
  }
  .h-thumb {
    display: grid;
    place-items: center;
    height: 10px;
    border: 1px solid #bcc0c6;
    background: #f0f2f7;
  }
  .timeline {
    height: 11px;
    padding-left: 2px;
    background: #dcdde0;
    border-top: 1px solid #b5b8bd;
  }
  .collapsed {
    background: #e2e3e5;
    border-left: 1px solid #aaadb3;
    border-right: 1px solid #b9bcc1;
  }

  .right-dock {
    background: var(--panel);
    border-right: 6px solid #c9cbd0;
  }
  .right-dock .dock-head {
    margin-right: -6px;
    padding: 0 1px;
  }
  .navigator {
    height: 110px;
    background: #c4c4c4;
    border-bottom: 1px solid #aaa;
  }
  .nav-frame {
    width: 104px;
    height: 100%;
    margin-left: 44px;
    border: solid #ee4b4b;
    border-width: 0 2px;
  }
  .nav-paper {
    width: 82px;
    height: 100%;
    margin-left: 1px;
    background: #fff;
  }
  .nav-row {
    display: flex;
    align-items: center;
    justify-content: space-between;
    height: 16px;
    padding-left: 4px;
  }
  .nav-row .range {
    width: 60px;
    height: 9px;
    margin: 0;
    border: 1px solid #bbb;
    background: linear-gradient(to bottom right, #fff 50%, #b4b4b4 50%);
  }
  .nav-row .arch-range {
    background: radial-gradient(ellipse 18px 10px at 75% 100%, #b4b4b4 98%, transparent), radial-gradient(ellipse 14px 9px at 0 0, #b4b4b4 98%, transparent), #fff;
  }
  .nav-value {
    width: 32px;
    text-align: right;
  }
  .vline {
    width: 1px;
    height: 12px;
    background: #ccc;
  }
  .layer-property {
    display: flex;
    height: 89px;
    border-bottom: 1px solid #aaa;
  }
  .lp-body {
    flex: 1;
    padding: 2px 4px 0 8px;
  }
  .legend {
    display: flex;
    align-items: center;
    gap: 3px;
    height: 13px;
  }
  .legend::after {
    content: '';
    flex: 1;
    border-top: 1px solid #d5d8dd;
  }
  .effects,
  .color-mode,
  .blend-mode,
  .combo {
    display: flex;
    align-items: center;
    border: 1px solid #bfc2c8;
    border-radius: 2px;
    background: linear-gradient(#fbfcff, #e8eaef);
  }
  .effects {
    justify-content: space-around;
    width: 64px;
    height: 14px;
    margin-left: auto;
  }
  .color-mode {
    justify-content: center;
    gap: 4px;
    width: 114px;
    height: 15px;
    margin: 1px 0 0 4px;
    padding: 0 2px 0 32px;
  }
  .color-mode span {
    flex: 1;
    text-align: left;
  }
  .layer-bar {
    display: flex;
    flex: none;
    align-items: center;
    justify-content: space-between;
    gap: 2px;
    height: 17px;
    padding-right: 2px;
    border-bottom: 1px solid #dfe2e7;
  }
  .layer-bar .value {
    padding-right: 0;
  }
  .new-bar {
    height: 18px;
    padding-left: 2px;
    border-bottom: 1px solid #8d9199;
  }
  .blend-mode {
    width: 88px;
    height: 14px;
  }
  .blend-mode span {
    flex: 1;
  }
  .opacity-bar {
    width: 56px;
    height: 8px;
    border: 1px solid #aaa;
  }
  .combo {
    height: 14px;
  }
  .blank {
    width: 14px;
    height: 11px;
    border: 1px solid #bbb;
    background: #fff;
  }
  .layer-list {
    flex: 1;
    display: flex;
    padding-left: 3px;
  }
  .layer-rows {
    flex: 1;
    border-left: 1px solid var(--line);
  }
  .layer {
    display: grid;
    grid-template-columns: 14px 14px 83px minmax(0, 1fr);
    height: 103px;
    border-bottom: 1px solid var(--line);
  }
  .layer.current {
    background: linear-gradient(90deg, var(--panel) 28px, transparent 28px), linear-gradient(#d7e8f4, #c4d7e2);
  }
  .cell {
    display: grid;
    place-items: center;
    height: 100%;
    border-right: 1px solid var(--line);
  }
  .lock-box {
    width: 8px;
    height: 9px;
    border: 1px solid #dcdfe4;
  }
  .thumb {
    margin: 2px 4px;
    border: 1px solid #444;
    background-color: #fff;
  }
  .current .thumb {
    outline: 2px solid #7d8991;
  }
  .layer-text {
    display: flex;
    flex-direction: column;
    min-width: 0;
    padding: 2px 0 0;
    white-space: nowrap;
  }
  .badge {
    display: grid;
    place-items: center;
    width: 16px;
    height: 16px;
    margin-left: 2px;
    border: 1px solid #555;
  }
  .info {
    padding-top: 18px;
    font: 9px/12px 'Liberation Sans Narrow', 'Arial Narrow', sans-serif;
  }
  .info.indent {
    padding: 3px 0 0 20px;
  }
  .name {
    margin-top: auto;
  }

  .dialog {
    position: absolute;
    left: 383px;
    top: 168px;
    display: flex;
    flex-direction: column;
    width: 311px;
    height: 469px;
    padding: 0 4px 5px 3px;
    border: 1px solid #aeb0b5;
    background: #dcdde0;
    box-shadow: 2px 3px 3px #7779;
  }
  .dialog-title {
    display: flex;
    align-items: center;
    height: 14px;
    margin-right: -2px;
    padding-left: 8px;
    color: #777;
    font: 9px/12px 'Liberation Sans Narrow', 'Arial Narrow', sans-serif;
  }
  .dialog-title span {
    flex: 1;
    text-align: center;
  }
  .dialog-preview {
    height: 75px;
    border: 1px solid var(--line);
    background: var(--panel);
  }
  .dialog-main {
    flex: 1;
    display: grid;
    grid-template-columns: 101px 1fr;
    background: var(--panel);
  }
  .categories {
    display: flex;
    flex-direction: column;
    gap: 1px;
    padding-top: 1px;
    border: 1px solid #868a92;
  }
  .categories button {
    justify-content: flex-start;
    height: 12px;
    padding-left: 2px;
    border: 1px solid transparent;
    line-height: 10px;
  }
  .categories .selected {
    border-color: #a6c4d5;
    background: var(--blue);
  }
  .show-category {
    margin: auto 0 0 1px;
  }
  .detail {
    display: flex;
    flex-direction: column;
    min-width: 0;
  }
  .intro {
    height: 34px;
    margin: 0;
    padding: 7px 0 0 3px;
    line-height: 10px;
    word-break: break-all;
  }
  .settings {
    height: 212px;
    padding-left: 1px;
    border: 1px solid #868a92;
  }
  .setting {
    display: flex;
    align-items: center;
    gap: 1px;
    height: 22px;
    padding-right: 3px;
  }
  .setting.double {
    height: 32px;
  }
  .setting.thin {
    height: 15px;
  }
  .setting .refer-group {
    width: 81px;
    margin-left: auto;
  }
  .eye-button,
  .arrow-button {
    flex: none;
    align-self: stretch;
    width: 11px;
    margin: 2px 0;
    border: 1px solid #b7bac1;
    border-radius: 2px;
    background: linear-gradient(90deg, #f9fafd, #eceef3);
  }
  .eye-button.shown {
    background: #cdcfd4;
  }
  .arrow-button {
    width: 8px;
  }
  .arrow-button.pick {
    width: 11px;
  }
  .branch {
    flex: none;
    width: 11px;
  }
  .branch.start::after {
    content: '';
    display: block;
    width: 2px;
    height: 10px;
    margin: 8px 0 0 5px;
    border-left: 1px solid #aaa;
    border-top: 2px solid #aaa;
  }
  .branch.end {
    align-self: stretch;
  }
  .branch.end::after {
    content: '';
    display: block;
    width: 6px;
    height: 50%;
    margin-left: 5px;
    border: solid #bbb;
    border-width: 0 0 1px 1px;
  }
  .nested {
    margin-left: 11px;
  }
  .exclude {
    flex: 1;
    color: #aaa;
    line-height: 11px;
  }
  .exclude span {
    padding-left: 11px;
  }
  .exclude-buttons {
    display: flex;
    justify-content: flex-end;
    gap: 3px;
  }
  .exclude-buttons button {
    width: 26px;
    height: 19px;
    border: 1px solid #c2c5cb;
  }
  .exclude-buttons .on {
    background: #d3d4d8;
  }
  hr {
    margin: 1px 3px 1px 7px;
    border: 0;
    border-top: 1px solid #d3d5da;
  }
  .no-color {
    flex: none;
    width: 12px;
    height: 14px;
    margin-left: auto;
    border: 1px solid #cdd0d6;
  }
  .about {
    flex: 1;
    padding: 3px 2px 2px;
    border: 1px solid #868a92;
    border-top: 0;
  }
  .about h2 {
    display: flex;
    align-items: center;
    gap: 3px;
    margin: 0;
    font: inherit;
  }
  .about p {
    margin: 0 0 0 4px;
  }
  .dialog-footer {
    display: grid;
    grid-template-columns: 13px 126px 1fr;
    gap: 2px;
    align-items: center;
    height: 16px;
  }
  .dialog-footer button {
    height: 14px;
    border: 1px solid #b9bcc2;
    background: linear-gradient(#fafbfe, #e6e8ec);
  }
  .callout {
    position: absolute;
    left: 170px;
    top: 350px;
    pointer-events: none;
  }
</style>
